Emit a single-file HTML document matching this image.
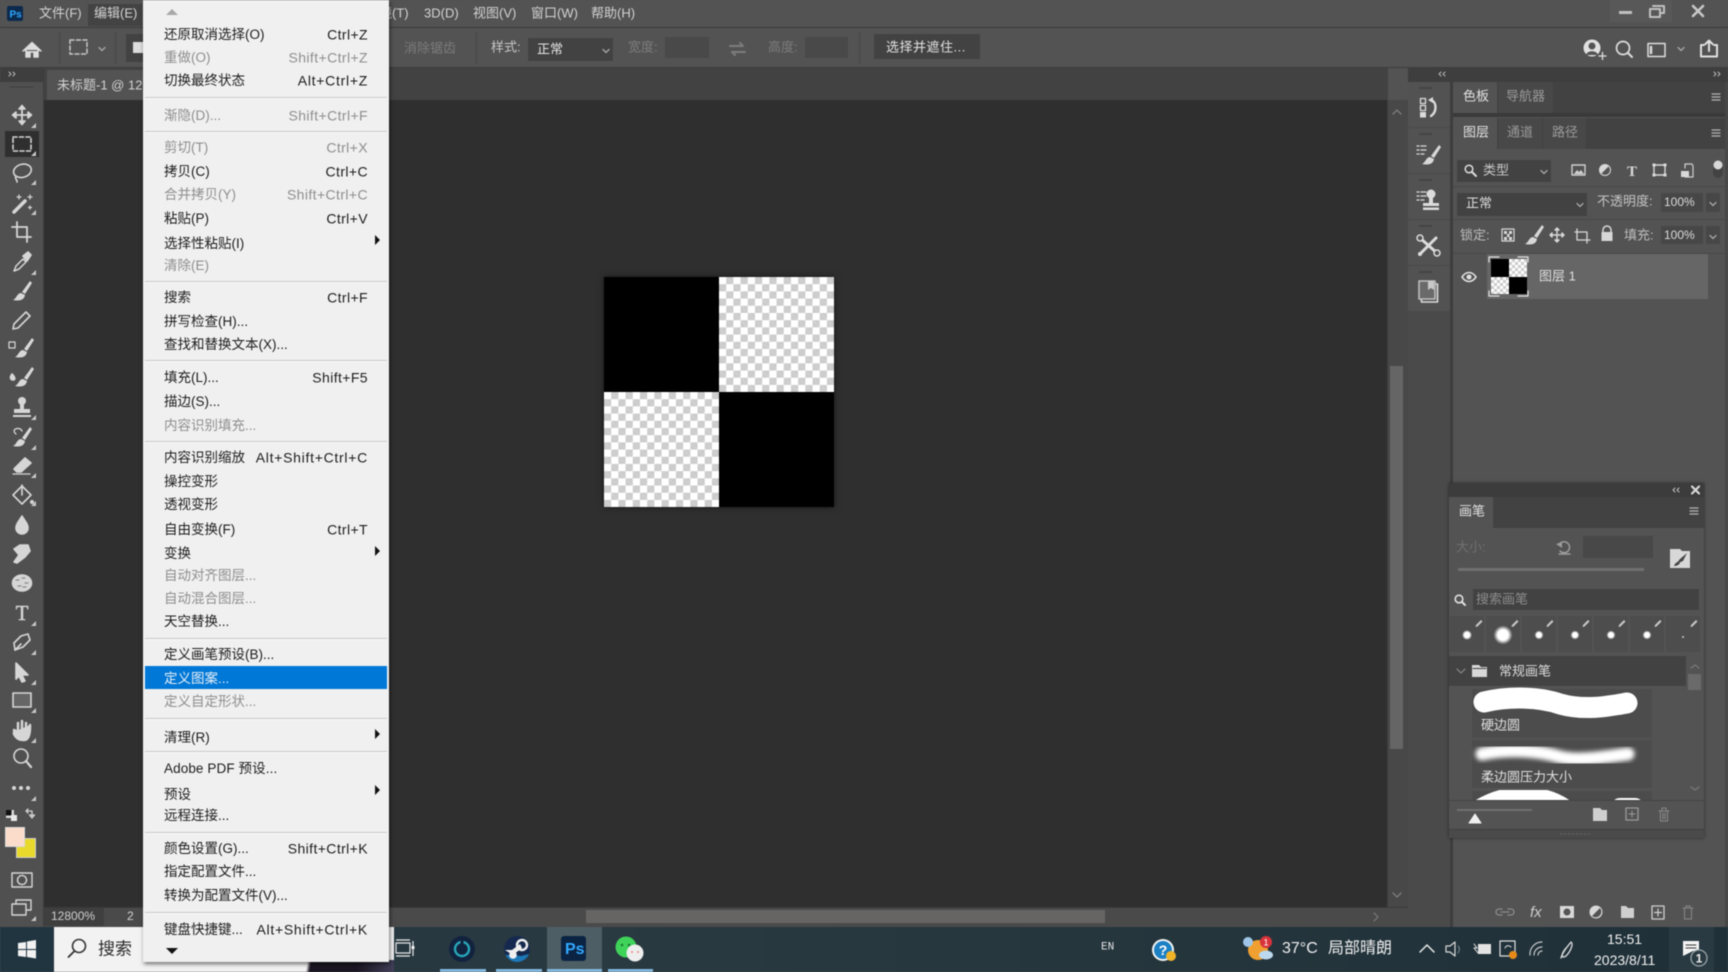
<!DOCTYPE html>
<html lang="zh"><head><meta charset="utf-8"><title>Photoshop</title>
<style>
html,body{margin:0;padding:0;background:#535353}
#p{position:relative;width:1728px;height:972px;overflow:hidden;background:#535353;font-family:"Liberation Sans","Noto Sans CJK SC",sans-serif;filter:blur(.45px)}
.b{position:absolute}
.t{position:absolute;white-space:nowrap;line-height:1;transform:translateY(-50%);font-size:13px;color:#d2d2d2}
.d{color:#7c7c7c}
.m{position:absolute;left:21px;white-space:nowrap;line-height:1;transform:translateY(calc(-50% + .7px));font-size:13.5px;color:#1c1c1c}
.s{position:absolute;right:21px;white-space:nowrap;line-height:1;transform:translateY(calc(-50% + .3px));font-size:14px;letter-spacing:.4px;color:#1c1c1c}
.w{letter-spacing:.72px}
.g{color:#8e8e8e}
.h{position:absolute;left:2px;right:2px;height:1px;background:#c6c6c6;box-shadow:0 1px 0 #fafafa}
svg{position:absolute;left:0;top:0}
</style></head><body><div id="p">

<!-- top bars -->
<div class="b" style="left:0;top:27px;width:1728px;height:1px;background:#3a3a3a"></div>
<div class="b" style="left:88px;top:4px;width:54px;height:22px;background:#434343"></div>
<div class="b" style="left:1610px;top:0;width:62px;height:22px;background:#585858"></div>
<div class="b" style="left:0;top:67px;width:1728px;height:1px;background:#3d3d3d"></div>

<span class="t" style="left:39px;top:13px">文件(F)</span>
<span class="t" style="left:94px;top:13px">编辑(E)</span>
<span class="t" style="left:366px;top:13px">滤镜(T)</span>
<span class="t" style="left:424px;top:13px">3D(D)</span>
<span class="t" style="left:473px;top:13px">视图(V)</span>
<span class="t" style="left:531px;top:13px">窗口(W)</span>
<span class="t" style="left:591px;top:13px">帮助(H)</span>

<!-- options bar -->
<div class="b" style="left:59px;top:32px;width:1px;height:32px;background:#474747"></div>
<div class="b" style="left:115px;top:32px;width:1px;height:32px;background:#474747"></div>
<div class="b" style="left:126px;top:34px;width:30px;height:28px;background:#424242"></div>
<div class="b" style="left:133px;top:42px;width:11px;height:11px;background:#dcdcdc"></div>
<span class="t d" style="left:404px;top:48px">消除锯齿</span>
<div class="b" style="left:476px;top:32px;width:1px;height:32px;background:#474747"></div>
<span class="t" style="left:491px;top:47px;color:#c8c8c8">样式:</span>
<div class="b" style="left:528px;top:38px;width:85px;height:23px;background:#424242"></div>
<span class="t" style="left:537px;top:49px;color:#e4e4e4">正常</span>
<span class="t d" style="left:628px;top:47px">宽度:</span>
<div class="b" style="left:665px;top:37px;width:44px;height:21px;background:#494949"></div>
<span class="t d" style="left:768px;top:47px">高度:</span>
<div class="b" style="left:805px;top:37px;width:43px;height:21px;background:#494949"></div>
<div class="b" style="left:859px;top:32px;width:1px;height:32px;background:#474747"></div>
<div class="b" style="left:874px;top:34px;width:106px;height:25px;background:#424242"></div>
<span class="t" style="left:886px;top:47px;color:#e2e2e2;letter-spacing:.5px">选择并遮住...</span>

<!-- tab + canvas -->
<div class="b" style="left:44px;top:68px;width:1344px;height:32px;background:#424242"></div>
<div class="b" style="left:47px;top:70px;width:100px;height:30px;background:#535353"></div>
<span class="t" style="left:57px;top:85px">未标题-1 @ 12</span>
<div class="b" style="left:44px;top:100px;width:1343px;height:807px;background:#2f2f2f"></div>

<!-- artboard -->
<div class="b" style="left:604px;top:277px;width:230px;height:230px;box-shadow:0 0 6px rgba(0,0,0,.55);background:#fff"></div>
<div class="b" style="left:719px;top:277px;width:115px;height:115px;background-color:#fff;background-image:linear-gradient(45deg,#ccc 25%,transparent 25%,transparent 75%,#ccc 75%),linear-gradient(45deg,#ccc 25%,transparent 25%,transparent 75%,#ccc 75%);background-size:14.4px 14.4px;background-position:0 0,7.2px 7.2px"></div>
<div class="b" style="left:604px;top:392px;width:115px;height:115px;background-color:#fff;background-image:linear-gradient(45deg,#ccc 25%,transparent 25%,transparent 75%,#ccc 75%),linear-gradient(45deg,#ccc 25%,transparent 25%,transparent 75%,#ccc 75%);background-size:14.4px 14.4px;background-position:0 0,7.2px 7.2px"></div>
<div class="b" style="left:604px;top:277px;width:115px;height:115px;background:#000"></div>
<div class="b" style="left:719px;top:392px;width:115px;height:115px;background:#000"></div>

<!-- vertical scrollbar -->
<div class="b" style="left:1387px;top:100px;width:21px;height:807px;background:#484848;border-left:1px solid #3c3c3c;box-sizing:border-box"></div>
<div class="b" style="left:1390px;top:366px;width:13px;height:383px;background:#656565"></div>
<!-- bottom status & h scrollbar -->
<div class="b" style="left:44px;top:907px;width:1364px;height:20px;background:#4a4a4a;border-top:1px solid #3a3a3a;box-sizing:border-box"></div>
<div class="b" style="left:44px;top:908px;width:60px;height:18px;background:#3f3f3f"></div>
<span class="t" style="left:51px;top:916px;font-size:12px;color:#d0d0d0">12800%</span>
<span class="t" style="left:127px;top:916px;font-size:12px;color:#d0d0d0">2</span>
<div class="b" style="left:586px;top:910px;width:519px;height:13px;background:#676564"></div>

<!-- left tools -->
<div class="b" style="left:0;top:68px;width:44px;height:859px;background:#505050;border-right:1px solid #3f3f3f;box-sizing:border-box"></div>
<div class="b" style="left:0;top:68px;width:44px;height:14px;background:#3e3e3e"></div>
<div class="b" style="left:5px;top:131px;width:34px;height:26px;background:#2f2f2f"></div>
<div class="b" style="left:16px;top:838px;width:20px;height:20px;background:#e8d92c;border:1px solid #cfcfcf;box-sizing:border-box"></div>
<div class="b" style="left:5px;top:827px;width:20px;height:20px;background:#fbdccb;border:1px solid #d9d9d9;box-sizing:border-box"></div>

<!-- right dock -->
<div class="b" style="left:1408px;top:68px;width:320px;height:14px;background:#3e3e3e"></div>
<div class="b" style="left:1408px;top:82px;width:42px;height:845px;background:#4a4a4a"></div>
<div class="b" style="left:1408px;top:82px;width:42px;height:45px;background:#525252"></div>
<div class="b" style="left:1408px;top:128px;width:42px;height:45px;background:#525252"></div>
<div class="b" style="left:1408px;top:174px;width:42px;height:45px;background:#525252"></div>
<div class="b" style="left:1408px;top:220px;width:42px;height:45px;background:#525252"></div>
<div class="b" style="left:1408px;top:266px;width:42px;height:45px;background:#525252"></div>
<div class="b" style="left:1450px;top:82px;width:3px;height:845px;background:#3d3d3d"></div>
<div class="b" style="left:1453px;top:82px;width:275px;height:845px;background:#535353"></div>
<div class="b" style="left:1725px;top:82px;width:3px;height:845px;background:#474747"></div>

<!-- panel tabs -->
<div class="b" style="left:1453px;top:82px;width:272px;height:31px;background:#424242"></div>
<div class="b" style="left:1453px;top:82px;width:44px;height:31px;background:#535353"></div>
<div class="b" style="left:1498px;top:82px;width:55px;height:31px;background:#484848"></div>
<div class="b" style="left:1453px;top:113px;width:272px;height:4px;background:#3a3a3a"></div>
<div class="b" style="left:1453px;top:118px;width:272px;height:31px;background:#424242"></div>
<div class="b" style="left:1453px;top:118px;width:44px;height:31px;background:#535353"></div>
<div class="b" style="left:1498px;top:118px;width:44px;height:31px;background:#484848"></div>
<div class="b" style="left:1543px;top:118px;width:43px;height:31px;background:#484848"></div>
<span class="t" style="left:1463px;top:96px;color:#e2e2e2">色板</span>
<span class="t" style="left:1506px;top:96px;color:#9a9a9a">导航器</span>
<span class="t" style="left:1463px;top:132px;color:#e2e2e2">图层</span>
<span class="t" style="left:1507px;top:132px;color:#9a9a9a">通道</span>
<span class="t" style="left:1552px;top:132px;color:#9a9a9a">路径</span>

<!-- layer controls -->
<div class="b" style="left:1457px;top:160px;width:94px;height:22px;background:#424242"></div>
<span class="t" style="left:1483px;top:170px;color:#c9c9c9">类型</span>
<div class="b" style="left:1453px;top:186px;width:272px;height:1px;background:#484848"></div>
<div class="b" style="left:1457px;top:193px;width:130px;height:23px;background:#424242"></div>
<span class="t" style="left:1466px;top:203px;color:#dcdcdc">正常</span>
<span class="t" style="left:1597px;top:201px;color:#c4c4c4">不透明度:</span>
<div class="b" style="left:1661px;top:193px;width:42px;height:19px;background:#474747"></div>
<div class="b" style="left:1706px;top:193px;width:14px;height:19px;background:#474747"></div>
<span class="t" style="left:1664px;top:202px;font-size:12px;color:#dcdcdc">100%</span>
<div class="b" style="left:1453px;top:219px;width:272px;height:1px;background:#484848"></div>
<span class="t" style="left:1460px;top:235px;color:#bdbdbd">锁定:</span>
<span class="t" style="left:1624px;top:235px;color:#bdbdbd">填充:</span>
<div class="b" style="left:1661px;top:226px;width:42px;height:18px;background:#474747"></div>
<div class="b" style="left:1706px;top:226px;width:14px;height:18px;background:#474747"></div>
<span class="t" style="left:1664px;top:235px;font-size:12px;color:#dcdcdc">100%</span>
<div class="b" style="left:1453px;top:253px;width:272px;height:1px;background:#484848"></div>
<div class="b" style="left:1487px;top:254px;width:221px;height:45px;background:#666666"></div>
<div class="b" style="left:1491px;top:259px;width:36px;height:35px;background-color:#fff;background-image:linear-gradient(45deg,#ccc 25%,transparent 25%,transparent 75%,#ccc 75%),linear-gradient(45deg,#ccc 25%,transparent 25%,transparent 75%,#ccc 75%);background-size:6px 6px;background-position:0 0,3px 3px"></div>
<div class="b" style="left:1491px;top:259px;width:18px;height:18px;background:#000"></div>
<div class="b" style="left:1509px;top:277px;width:18px;height:17px;background:#000"></div>
<span class="t" style="left:1539px;top:276px;color:#dfdfdf">图层 1</span>

<!-- brush panel -->
<div class="b" style="left:1449px;top:483px;width:255px;height:355px;background:#535353;box-shadow:0 0 3px rgba(0,0,0,.5)"></div>
<div class="b" style="left:1449px;top:483px;width:255px;height:14px;background:#3c3c3c"></div>
<div class="b" style="left:1449px;top:497px;width:255px;height:31px;background:#424242"></div>
<div class="b" style="left:1449px;top:497px;width:44px;height:31px;background:#535353"></div>
<span class="t" style="left:1459px;top:511px;color:#e2e2e2">画笔</span>
<span class="t" style="left:1456px;top:547px;color:#707070">大小:</span>
<div class="b" style="left:1583px;top:536px;width:70px;height:22px;background:#484848"></div>
<div class="b" style="left:1458px;top:568px;width:186px;height:3px;background:#707070"></div>
<div class="b" style="left:1473px;top:589px;width:226px;height:21px;background:#424242"></div>
<span class="t" style="left:1476px;top:599px;color:#8c8c8c">搜索画笔</span>
<div class="b" style="left:1450px;top:616px;width:34px;height:36px;background:#4d4d4d"></div>
<div class="b" style="left:1486px;top:616px;width:34px;height:36px;background:#4d4d4d"></div>
<div class="b" style="left:1522px;top:616px;width:34px;height:36px;background:#4d4d4d"></div>
<div class="b" style="left:1558px;top:616px;width:34px;height:36px;background:#4d4d4d"></div>
<div class="b" style="left:1594px;top:616px;width:34px;height:36px;background:#4d4d4d"></div>
<div class="b" style="left:1630px;top:616px;width:34px;height:36px;background:#4d4d4d"></div>
<div class="b" style="left:1666px;top:616px;width:34px;height:36px;background:#4d4d4d"></div>
<div class="b" style="left:1449px;top:656px;width:237px;height:30px;background:#424242"></div>
<span class="t" style="left:1499px;top:671px;color:#dcdcdc">常规画笔</span>
<div class="b" style="left:1688px;top:674px;width:13px;height:16px;background:#6a6a6a"></div>
<div class="b" style="left:1472px;top:689px;width:180px;height:49px;background:#4c4c4c"></div>
<div class="b" style="left:1472px;top:740px;width:180px;height:48px;background:#4c4c4c"></div>
<div class="b" style="left:1472px;top:791px;width:180px;height:9px;background:#4c4c4c"></div>
<span class="t" style="left:1481px;top:725px;color:#e0e0e0">硬边圆</span>
<span class="t" style="left:1481px;top:777px;color:#e0e0e0">柔边圆压力大小</span>
<div class="b" style="left:1449px;top:800px;width:255px;height:1px;background:#444"></div>
<div class="b" style="left:1457px;top:809px;width:75px;height:2px;background:#707070"></div>
<div class="b" style="left:1449px;top:829px;width:255px;height:9px;background:#4a4a4a;border-top:1px solid #3f3f3f;box-sizing:border-box"></div>

<!-- taskbar -->
<div class="b" style="left:0;top:927px;width:1728px;height:45px;background:linear-gradient(90deg,#213541 0,#2a3a41 35%,#25363d 65%,#1f3039 100%)"></div>
<div class="b" style="left:1669px;top:927px;width:45px;height:45px;background:#2a3a42"></div>
<div class="b" style="left:54px;top:927px;width:340px;height:45px;background:#f2f2f2"></div>
<div class="b" style="left:300px;top:960px;width:94px;height:12px;background:linear-gradient(100deg,#f2f2f2 0 8%,#1a1522 12% 60%,#42405a 100%)"></div>
<span class="t" style="left:98px;top:949px;font-size:17px;color:#2b2b2b">搜索</span>
<div class="b" style="left:547px;top:927px;width:55px;height:45px;background:#4e5e65"></div>
<div class="b" style="left:440px;top:969px;width:46px;height:3px;background:#84b9de"></div>
<div class="b" style="left:496px;top:969px;width:46px;height:3px;background:#84b9de"></div>
<div class="b" style="left:547px;top:969px;width:55px;height:3px;background:#84b9de"></div>
<div class="b" style="left:608px;top:969px;width:45px;height:3px;background:#84b9de"></div>
<span class="t" style="left:1101px;top:948px;font-size:11px;font-family:'Liberation Mono',monospace;color:#e6e6e6">EN</span>
<span class="t" style="left:1282px;top:949px;font-size:16px;color:#f0f0f0">37°C</span>
<span class="t" style="left:1328px;top:949px;font-size:16px;color:#f0f0f0">局部晴朗</span>
<span class="t" style="left:1607px;top:939px;font-size:14px;color:#f0f0f0">15:51</span>
<span class="t" style="left:1594px;top:960px;font-size:14px;color:#f0f0f0">2023/8/11</span>

<!-- icons -->
<svg width="1728" height="972" viewBox="0 0 1728 972" fill="none" stroke-linecap="round" stroke-linejoin="round">
<defs>
<radialGradient id="dot"><stop offset="0" stop-color="#fff"/><stop offset=".55" stop-color="#fff"/><stop offset="1" stop-color="#fff" stop-opacity="0"/></radialGradient>
<filter id="soft" x="-10%" y="-50%" width="120%" height="200%"><feGaussianBlur stdDeviation="2.300"/></filter>
<g id="br"><path d="M8-10 0 1 3 3 10-8Z" fill="#d8d8d8"/><path d="M-1 2C-5 2-5 7-9 9-4 10 2 10 3 4Z" fill="#d8d8d8"/></g>
<path id="ct" d="M14 8V13H9Z" fill="#c8c8c8"/>
<g id="pn"><path d="M-3 3 2-2 3.500-.5-1.500 4.500-3.500 5Z" fill="#c8c8c8"/></g>
<g id="chev"><path d="M-3-1.500 0 1.500 3-1.500" stroke="#a8a8a8" stroke-width="1.300"/></g>
<g id="ham"><path d="M-4-3H4M-4 0H4M-4 3H4" stroke="#b4b4b4" stroke-width="1.200"/></g>
</defs>

<!-- ps logo -->
<rect x="7" y="6" width="16" height="15" rx="2" fill="#0c2a4d"/>
<text x="9.500" y="17.500" font-family="Liberation Sans" font-size="10" font-weight="bold" fill="#31a8ff">Ps</text>

<!-- top left options -->
<path d="M23 51 32 42.500 41 51M26 50V57H30V52H34V57H38V50" fill="#dcdcdc" stroke="#dcdcdc" stroke-width="1.500"/>
<rect x="70" y="40" width="17" height="14" stroke="#c8c8c8" stroke-width="1.500" stroke-dasharray="4 2.500"/>
<use href="#chev" x="102" y="49"/>
<use href="#chev" x="606" y="51"/>
<path d="M730 46H743L740 43M745 52H732L735 55" stroke="#7c7c7c" stroke-width="2"/>

<!-- window controls -->
<path d="M1619 12.500H1632" stroke="#c0c0c0" stroke-width="3" stroke-linecap="butt"/>
<path d="M1653 6H1664V13H1660M1650 9H1660V17H1650Z" stroke="#c0c0c0" stroke-width="2"/>
<path d="M1693 6 1703 16M1703 6 1693 16" stroke="#c8c8c8" stroke-width="2.600"/>

<!-- top right -->
<circle cx="1592" cy="48" r="8.500" fill="#e0e0e0"/><circle cx="1592" cy="46" r="3.500" fill="#535353"/><path d="M1586 55C1587 50 1597 50 1598 55" fill="#535353"/><path d="M1599 56H1606M1602.500 52.500V59.500" stroke="#e0e0e0" stroke-width="1.300"/>
<circle cx="1623" cy="48" r="6.500" stroke="#dcdcdc" stroke-width="1.700"/><path d="M1628 53 1632 57" stroke="#dcdcdc" stroke-width="2"/>
<rect x="1648" y="43.500" width="17" height="13" stroke="#dcdcdc" stroke-width="1.500"/><path d="M1651 47V53" stroke="#dcdcdc" stroke-width="2.500"/>
<use href="#chev" x="1681" y="49"/>
<path d="M1704 45H1701V56.500H1717V45H1714M1709 51V41M1705.500 44 1709 40.500 1712.500 44" stroke="#e0e0e0" stroke-width="2"/>

<!-- double chevrons -->
<path d="M9 72 11 74 9 76M13 72 15 74 13 76" stroke="#b8b8b8"/>
<path d="M1441 72 1439 74 1441 76M1445 72 1443 74 1445 76" stroke="#b8b8b8"/>
<path d="M1714 72 1716 74 1714 76M1718 72 1720 74 1718 76" stroke="#b8b8b8"/>
<path d="M10 87H34" stroke="#3f3f3f" stroke-dasharray="2 1"/>

<!-- tools -->
<g stroke="#d6d6d6" stroke-width="1.600">
<g transform="translate(22,115)"><path d="M0-9V9M-9 0H9" stroke-width="1.800"/><path d="M-3-6 0-9.500 3-6ZM-3 6 0 9.500 3 6ZM-6-3-9.500 0-6 3ZM6-3 9.500 0 6 3Z" fill="#d6d6d6"/></g>
<g transform="translate(22,144)"><rect x="-9" y="-7" width="18" height="14" stroke-dasharray="4 2.500"/></g>
<g transform="translate(22,173)"><ellipse cx="1" cy="-2" rx="9" ry="6.500" transform="rotate(-15)"/><path d="M-6 3C-8 6-4 7-5 9"/></g>
<g transform="translate(22,203)"><path d="M-8 9 3-2" stroke-width="3.500"/><path d="M-3-8V-4M-5-6H-1M8-8V-4M6-6H10M8 3V6M6.500 4.500H9.500" stroke-width="1.200"/></g>
<g transform="translate(22,232)"><path d="M-5-10V5H9M-10-5H5V10" stroke-width="1.800"/></g>
<g transform="translate(22,262)"><path d="M-8 9-6 4 1-3 4 0-3 7Z" stroke-width="1.500"/><path d="M1-6 6-10 9-7 5-1Z" fill="#d6d6d6"/></g>
<use href="#br" x="22" y="291" stroke="none"/>
<g transform="translate(22,320)"><path d="M-9 9-8 4 4-8 8-4-4 8Z"/></g>
<g transform="translate(24,348)"><use href="#br" stroke="none"/><rect x="-15" y="-6" width="6" height="6" stroke-width="1.200"/></g>
<g transform="translate(24,377)"><use href="#br" stroke="none"/><path d="M-12-3C-15 1-13 3-11 3-9 3-8 1-12-3Z" fill="#d6d6d6"/></g>
<g transform="translate(22,407)" fill="#d6d6d6" stroke="none"><circle cx="0" cy="-6" r="4"/><path d="M-2-3H2V2H8V6H-8V2H-2ZM-9 8H9V10H-9Z"/></g>
<g transform="translate(22,437)"><use href="#br" stroke="none"/><path d="M-6-3C-12-8-2-11 0-6" stroke-width="1.300"/></g>
<g transform="translate(22,465)"><path d="M-8 4 3-7 9-2-1 7H-5Z" fill="#d6d6d6"/><path d="M-9 9H8" stroke-width="1.300"/></g>
<g transform="translate(22,495)"><path d="M-9 0 0-9 9 0 0 9Z"/><path d="M0-10V0" /><circle cx="10" cy="7" r="2" fill="#d6d6d6" stroke="none"/></g>
<g transform="translate(22,525)"><path d="M0-9C3-4 6-1 6 3A6 6 0 0 1-6 3C-6-1-3-4 0-9Z" fill="#d6d6d6"/></g>
<g transform="translate(22,553)"><path d="M-8 9-3 2-8-4-2-8H6L8-2 3 4-5 10Z" fill="#d6d6d6"/></g>
<g transform="translate(22,583)"><ellipse cx="0" cy="0" rx="9.500" ry="8" fill="#d6d6d6"/><path d="M-6-3H-3M0-5H3M3 0H6M-4 3H-1M1 4H4" stroke="#8a8a8a" stroke-width="1.200"/></g>
<text x="22" y="620" text-anchor="middle" font-family="Liberation Serif" font-size="21" font-weight="normal" fill="#d6d6d6" stroke="#d6d6d6" stroke-width=".4">T</text>
<g transform="translate(22,642)"><path d="M-7 8-8 1-1-6 6-8 8-2 1 5Z"/><path d="M-7 8-1 2"/></g>
<g transform="translate(21,672)"><path d="M-5-9 7 3H1L4 9 1 10-2 4-5 7Z" fill="#d6d6d6"/></g>
<g transform="translate(22,700)"><rect x="-9" y="-7" width="18" height="14" fill="#666" stroke-width="1.600"/></g>
<g transform="translate(22,730)"><path d="M-8 2V4C-5 10-1 10 2 10 6 10 8 6 8-3V-5M4-7V1M0-9V1M-4-7V2M-8 0-4 2" fill="#d6d6d6" stroke-width="2.500"/></g>
<g transform="translate(21,758)"><circle cx="0" cy="-2" r="7"/><path d="M5 3 10 9" stroke-width="2.200"/></g>
<g transform="translate(21,788)" fill="#d6d6d6" stroke="none"><circle cx="-7" cy="0" r="2"/><circle cx="0" cy="0" r="2"/><circle cx="7" cy="0" r="2"/></g>
<g transform="translate(22,880)"><rect x="-10" y="-7" width="20" height="14" stroke-width="1.400"/><circle r="4.500" stroke-dasharray="1.500 1.500"/></g>
<g transform="translate(22,908)"><rect x="-6" y="-8" width="15" height="10" stroke-width="1.400"/><rect x="-10" y="-4" width="14" height="11" fill="#505050" stroke-width="1.400"/></g>
</g>
<use href="#ct" x="22" y="115"/><use href="#ct" x="22" y="143"/><use href="#ct" x="22" y="172"/><use href="#ct" x="22" y="202"/><use href="#ct" x="22" y="262"/><use href="#ct" x="22" y="407"/><use href="#ct" x="22" y="437"/><use href="#ct" x="22" y="465"/><use href="#ct" x="22" y="493"/><use href="#ct" x="22" y="613"/><use href="#ct" x="22" y="642"/><use href="#ct" x="22" y="672"/><use href="#ct" x="22" y="700"/><use href="#ct" x="22" y="730"/><use href="#ct" x="22" y="788"/><use href="#ct" x="22" y="908"/>
<rect x="6" y="810" width="8" height="8" fill="#d8d8d8"/><rect x="6" y="810" width="5.500" height="5.500" fill="#111"/><rect x="11" y="815" width="6" height="6" fill="#e8e8e8"/>
<path d="M26 811H32V816M32 818 29.500 815H34.500ZM26 811 28 809M26 811 28 813" stroke="#d0d0d0" stroke-width="1.300"/>

<!-- v scroll arrows -->
<path d="M1393 114 1397 110 1401 114" stroke="#7b7b7b" stroke-width="1.400"/>
<path d="M1393 893 1397 897 1401 893" stroke="#7b7b7b" stroke-width="1.400"/>
<path d="M1374 913 1378 917 1374 921" stroke="#7b7b7b" stroke-width="1.200"/>

<!-- dock icons -->
<g stroke="#dcdcdc" fill="#dcdcdc">
<path d="M1420 88H1432" stroke="#444" stroke-dasharray="2 1" stroke-width="2"/><path d="M1420 134H1432" stroke="#444" stroke-dasharray="2 1" stroke-width="2"/><path d="M1420 180H1432" stroke="#444" stroke-dasharray="2 1" stroke-width="2"/><path d="M1420 226H1432" stroke="#444" stroke-dasharray="2 1" stroke-width="2"/><path d="M1420 272H1432" stroke="#444" stroke-dasharray="2 1" stroke-width="2"/>
<g fill="none" stroke-width="1.300"><rect x="1420.500" y="98.500" width="5" height="5"/><rect x="1420.500" y="105.500" width="5" height="5"/></g><rect x="1420" y="112" width="6" height="5.500" stroke="none"/>
<path d="M1431 100C1437 102 1437 112 1431 116" fill="none" stroke-width="2.400"/><path d="M1428 100 1433 97V103Z" stroke="none"/>
<use href="#br" x="1431" y="155" stroke="none"/><path d="M1417 146H1419M1417 150H1419M1417 154H1419M1421 146H1426M1421 150H1426M1421 154H1424" stroke-width="1.300" fill="none"/>
<path d="M1417 192H1419M1417 196H1419M1417 200H1419M1421 192H1426M1421 196H1426M1421 200H1424" stroke-width="1.300" fill="none"/>
<g stroke="none"><circle cx="1431" cy="194" r="4.500"/><path d="M1429 197H1433V203H1439V206H1423V203H1429ZM1423 207.500H1439V210H1423Z"/></g>
<path d="M1421 253 1436 238M1420 238 1437 253" stroke-width="3" fill="none"/><circle cx="1420" cy="238" r="3" fill="#525252" stroke-width="1.500"/><circle cx="1437" cy="253" r="3" fill="#525252" stroke-width="1.500"/><circle cx="1420" cy="254" r="2" stroke="none"/>
<rect x="1421.500" y="284" width="16" height="18" fill="none" stroke-width="1.600"/><rect x="1419" y="281" width="16" height="18" fill="#6a6a6a" stroke="#bdbdbd" stroke-width="1.600"/><path d="M1428 281V290L1431 288 1434 290V281Z" fill="#c8c8c8" stroke="none"/>
</g>

<!-- panel hamburgers -->
<use href="#ham" x="1716" y="97"/><use href="#ham" x="1716" y="133"/><use href="#ham" x="1694" y="511"/>

<!-- filter row -->
<circle cx="1469" cy="169" r="3.800" stroke="#dcdcdc" stroke-width="1.500"/><path d="M1472 172 1476 176" stroke="#dcdcdc" stroke-width="2"/>
<use href="#chev" x="1544" y="172"/><use href="#chev" x="1580" y="205"/><use href="#chev" x="1713" y="204"/><use href="#chev" x="1713" y="237"/>
<rect x="1572" y="165" width="13" height="10" stroke="#d0d0d0" stroke-width="1.400"/><path d="M1574 174 1577 170 1579 172 1581 170 1584 174Z" fill="#d0d0d0"/>
<circle cx="1605" cy="170" r="5.500" fill="#d8d8d8"/><path d="M1608.900 166.100A5.500 5.500 0 0 1 1601.100 173.900Z" fill="#535353"/><circle cx="1605" cy="170" r="5.500" stroke="#d8d8d8"/>
<text x="1632" y="176" text-anchor="middle" font-family="Liberation Serif" font-size="15" font-weight="bold" fill="#d8d8d8">T</text>
<rect x="1654" y="165" width="11" height="10" stroke="#d8d8d8" stroke-width="1.400"/><path d="M1652.500 163.500h3v3h-3zM1663.500 163.500h3v3h-3zM1652.500 173.500h3v3h-3zM1663.500 173.500h3v3h-3z" fill="#d8d8d8"/>
<path d="M1685 168V164H1692L1693 166V177H1685" stroke="#d0d0d0" stroke-width="1.200"/><rect x="1681" y="171" width="8" height="6" fill="#d8d8d8"/>
<rect x="1713" y="165" width="10" height="13" rx="5" fill="#424242"/><circle cx="1718" cy="165" r="4.500" fill="#d8d8d8"/>

<!-- lock row -->
<g fill="#d8d8d8"><rect x="1502" y="229" width="12" height="12" fill="none" stroke="#d8d8d8" stroke-width="1.200"/><rect x="1504" y="231" width="3" height="3"/><rect x="1509" y="231" width="3" height="3"/><rect x="1507" y="234" width="2.500" height="3"/><rect x="1504" y="237" width="3" height="3"/><rect x="1509" y="237" width="3" height="3"/></g>
<use href="#br" x="1534" y="235" stroke="none"/>
<g transform="translate(1557,235)" stroke="#d8d8d8" stroke-width="1.400"><path d="M0-6V6M-6 0H6"/><path d="M-2-5 0-7 2-5ZM-2 5 0 7 2 5ZM-5-2-7 0-5 2ZM5-2 7 0 5 2Z" fill="#d8d8d8"/></g>
<path d="M1577 229V240H1590M1575 232H1587V243" stroke="#d8d8d8" stroke-width="1.300"/>
<path d="M1603 232V230A4 4 0 0 1 1611 230V232" stroke="#d8d8d8" stroke-width="1.500"/><rect x="1601.500" y="232" width="11" height="9" fill="#d8d8d8"/>

<!-- layer row -->
<path d="M1462 277C1466 271 1472 271 1476 277 1472 283 1466 283 1462 277Z" stroke="#e0e0e0" stroke-width="1.600"/><circle cx="1469" cy="277" r="2.500" fill="#e0e0e0"/>
<path d="M1489 262V257H1499M1518 257H1528V262M1489 291V296H1499M1518 296H1528V291" stroke="#e4e4e4" stroke-width="1.200"/>

<!-- brush panel icons -->
<path d="M1675 488 1673 490 1675 492M1679 488 1677 490 1679 492" stroke="#c4c4c4"/>
<path d="M1692 486.500 1699 493.500M1699 486.500 1692 493.500" stroke="#d8d8d8" stroke-width="2.200"/>
<path d="M1559 554H1570M1559 545A5.500 5.500 0 1 1 1560 551" stroke="#9c9c9c" stroke-width="1.500"/><path d="M1556 544 1562 542V548Z" fill="#9c9c9c"/>
<path d="M1670 549H1680L1682 551H1690V568H1670Z" fill="#d8d8d8"/><path d="M1676 564 1680 559 1687 553 1683 561Z" fill="#454545"/><path d="M1674 566C1675 563 1677 562 1678 562L1680 563C1679 565 1676 566 1674 566Z" fill="#454545"/>
<circle cx="1459" cy="599" r="3.800" stroke="#e0e0e0" stroke-width="1.600"/><path d="M1462 602 1465 605" stroke="#e0e0e0" stroke-width="2"/>
<g stroke="none">
<circle cx="1467" cy="635" r="5" fill="url(#dot)"/><circle cx="1503" cy="635" r="9.500" fill="url(#dot)"/><circle cx="1539" cy="635" r="4.500" fill="url(#dot)"/><circle cx="1575" cy="635" r="4.500" fill="url(#dot)"/><circle cx="1611" cy="635" r="4.500" fill="url(#dot)"/><circle cx="1647" cy="635" r="4.500" fill="url(#dot)"/><circle cx="1683" cy="637" r="1" fill="#ccc"/>
<use href="#pn" x="1479" y="622"/><use href="#pn" x="1515" y="622"/><use href="#pn" x="1550" y="622"/><use href="#pn" x="1586" y="622"/><use href="#pn" x="1622" y="622"/><use href="#pn" x="1658" y="622"/><use href="#pn" x="1694" y="622"/>
</g>
<path d="M1457 669 1461 673 1465 669" stroke="#8a8a8a" stroke-width="1.200"/>
<path d="M1472 665H1479L1481 667H1487V677H1472Z" fill="#d8d8d8"/><path d="M1473 668.500H1486" stroke="#424242"/>
<path d="M1691 668 1695 665 1699 668" stroke="#777" stroke-width="1.400"/><path d="M1691 787 1695 790 1699 787" stroke="#777" stroke-width="1.400"/>
<path d="M1484 702C1510 696 1540 697 1560 704 1585 711 1610 706 1627 703" stroke="#fff" stroke-width="21"/>
<path d="M1482 754C1510 748 1540 751 1560 757 1580 762 1610 756 1628 754" stroke="#fff" stroke-width="13" filter="url(#soft)"/>
<clipPath id="c3"><rect x="1472" y="790" width="180" height="10"/></clipPath>
<g clip-path="url(#c3)"><path d="M1480 808C1510 790 1545 794 1565 808" stroke="#fff" stroke-width="18"/><path d="M1620 807 1635 807" stroke="#fff" stroke-width="18"/></g>
<path d="M1469 823 1475 814 1481 823Z" fill="#f0f0f0" stroke="#f0f0f0"/>
<path d="M1593 808H1600L1602 810H1607V821H1593Z" fill="#cfcfcf"/>
<rect x="1626" y="808" width="12" height="12" stroke="#9a9a9a" stroke-width="1.300"/><path d="M1632 811V817M1629 814H1635" stroke="#9a9a9a"/>
<path d="M1659 811H1669M1662 811V808H1666V811M1660.500 811V821H1667.500V811M1663 813V819M1665 813V819" stroke="#888" stroke-width="1.100"/>
<path d="M1560 834H1590" stroke="#5f5f5f" stroke-dasharray="2 2"/>

<!-- layers footer -->
<path d="M1502 909H1499A3 3 0 0 0 1499 915H1502M1508 909H1511A3 3 0 0 1 1511 915H1508M1501 912H1509" stroke="#8a8a8a" stroke-width="1.300"/>
<text x="1530" y="917" font-family="Liberation Sans" font-style="italic" font-size="15" fill="#cfcfcf">fx</text>
<rect x="1560" y="906" width="14" height="12" fill="#d8d8d8"/><circle cx="1567" cy="912" r="3.500" fill="#535353"/>
<circle cx="1596" cy="912" r="6" fill="#d8d8d8"/><path d="M1600.200 907.800A6 6 0 0 1 1591.800 916.200Z" fill="#535353"/><circle cx="1596" cy="912" r="6" stroke="#d8d8d8"/>
<path d="M1621 906H1626L1628 908H1634V918H1621Z" fill="#cfcfcf"/>
<rect x="1652" y="906" width="12" height="13" stroke="#cfcfcf" stroke-width="1.300"/><path d="M1658 909V916M1654.500 912.500H1661.500" stroke="#cfcfcf" stroke-width="1.200"/>
<path d="M1683 908H1693M1686 908V906H1690V908M1684.500 908V919H1691.500V908" stroke="#808080" stroke-width="1.200"/>

<!-- taskbar icons -->
<path d="M18 943 26 942V949H18ZM27 941.500 36 940V949H27ZM18 950H26V957L18 956ZM27 950H36V958.500L27 957Z" fill="#f2f2f2"/>
<circle cx="79" cy="946" r="6.500" stroke="#333" stroke-width="1.600"/><path d="M74.500 951 68.500 957" stroke="#333" stroke-width="1.800"/>
<path d="M396 943H410V953H396ZM396 940H410M396 956H410M413 941V956" stroke="#e8e8e8" stroke-width="1.200" stroke-linecap="butt"/><rect x="411.500" y="946" width="3" height="3" fill="#f0f0f0"/>
<circle cx="462" cy="949" r="13" fill="#12233f"/><circle cx="462" cy="949" r="7" stroke="#27a7b8" stroke-width="2.400"/><path d="M462 941V945" stroke="#12233f" stroke-width="3"/>
<circle cx="517" cy="949" r="13" fill="#15294f"/><path d="M505.500 955A13 13 0 0 0 529 954L521 956 512 955Z" fill="#1e78b8"/>
<circle cx="522" cy="945" r="5" stroke="#f0f0f0" stroke-width="2.400"/><circle cx="513" cy="955" r="3.800" fill="#f0f0f0"/><path d="M505 950 513 955 522 948 520 944 512 950Z" fill="#f0f0f0"/>
<rect x="561" y="936" width="25" height="25" rx="3" fill="#0b2444"/>
<text x="565" y="954" font-family="Liberation Sans" font-size="16" font-weight="bold" fill="#31a8ff">Ps</text>
<circle cx="626" cy="947" r="10.500" fill="#3fd35a"/><circle cx="635" cy="953" r="8.500" fill="#eeeeee"/><circle cx="622" cy="945" r="1.300" fill="#1c7a31"/><circle cx="629" cy="945" r="1.300" fill="#1c7a31"/><circle cx="632" cy="952" r="1" fill="#e88"/><circle cx="638" cy="952" r="1" fill="#e88"/>

<!-- tray -->
<circle cx="1163" cy="950" r="11" fill="#f4f4f4"/><circle cx="1163" cy="950" r="9" fill="#1c80c4"/><text x="1163" y="955" text-anchor="middle" font-family="Liberation Sans" font-size="14" font-weight="bold" fill="#fff">?</text><circle cx="1171" cy="956" r="5" fill="#f0b429"/>
<circle cx="1258" cy="950" r="10" fill="#f0a030"/><circle cx="1248" cy="942" r="5" fill="#9fc6e6"/><circle cx="1266" cy="942" r="6" fill="#d9333a"/><text x="1266" y="945.500" text-anchor="middle" font-family="Liberation Sans" font-size="9" fill="#fff">1</text><ellipse cx="1266" cy="955" rx="7" ry="4.500" fill="#bcd8ee"/>
<path d="M1420 952 1427 945 1434 952" stroke="#e8e8e8" stroke-width="1.500"/>
<path d="M1446 946H1450L1455 942V956L1450 952H1446Z" stroke="#d8d8d8" stroke-width="1.200"/><path d="M1458 946C1460 948 1460 950 1458 953" stroke="#7f8a8f"/>
<rect x="1478" y="944" width="13" height="10" fill="#e4e4e4"/><path d="M1474 944 1477 948H1474L1478 953" stroke="#e4e4e4"/>
<rect x="1500" y="941" width="15" height="15" stroke="#e0e0e0" stroke-width="1.200"/><circle cx="1513" cy="955" r="4" fill="#e88a1a"/><path d="M1505 948A3.500 3.500 0 0 1 1511 947" stroke="#e0e0e0"/>
<path d="M1530 955A12 12 0 0 1 1542 942M1534 955A8 8 0 0 1 1542 947M1538 955A4 4 0 0 1 1542 951" stroke="#c8c8c8" stroke-width="1.200"/>
<path d="M1561 958C1563 950 1570 944 1571 942 1574 944 1570 952 1566 956 1562 959 1560 955 1566 948" stroke="#e0e0e0" stroke-width="1.300"/>
<path d="M1683 941H1699V951H1693L1683 956Z" fill="#f4f4f4"/><path d="M1686 945H1696M1686 948H1696" stroke="#333"/><circle cx="1699" cy="958" r="8" stroke="#9aa5aa" stroke-width="1.300" fill="#2a3a42"/><text x="1699" y="962.500" text-anchor="middle" font-family="Liberation Sans" font-size="12" font-weight="bold" fill="#f0f0f0">1</text>
</svg>

<!-- edit menu -->
<div class="b" style="left:143px;top:0;width:246px;height:962px;background:#f0f0f0;box-shadow:1px 2px 4px rgba(0,0,0,.55)">
<svg width="246" height="962" viewBox="0 0 246 962"><path d="M23 15 29 9 35 15Z" fill="#a8a8a8"/><path d="M232 235 237 240 232 245ZM232 546 237 551 232 556ZM232 729 237 734 232 739ZM232 785 237 790 232 795Z" fill="#111"/><path d="M23 948H35L29 954Z" fill="#111"/></svg>
<span class="m" style="top:34px">还原取消选择(O)</span><span class="s" style="top:34px">Ctrl+Z</span>
<span class="m g" style="top:57px">重做(O)</span><span class="s g" style="top:57px">Shift+Ctrl+Z</span>
<span class="m" style="top:80px">切换最终状态</span><span class="s w" style="top:80px">Alt+Ctrl+Z</span>
<div class="h" style="top:97px"></div>
<span class="m g" style="top:115px">渐隐(D)...</span><span class="s g" style="top:115px">Shift+Ctrl+F</span>
<div class="h" style="top:131px"></div>
<span class="m g" style="top:147px">剪切(T)</span><span class="s g" style="top:147px">Ctrl+X</span>
<span class="m" style="top:171px">拷贝(C)</span><span class="s" style="top:171px">Ctrl+C</span>
<span class="m g" style="top:194px">合并拷贝(Y)</span><span class="s g" style="top:194px">Shift+Ctrl+C</span>
<span class="m" style="top:218px">粘贴(P)</span><span class="s" style="top:218px">Ctrl+V</span>
<span class="m" style="top:243px">选择性粘贴(I)</span>
<span class="m g" style="top:265px">清除(E)</span>
<div class="h" style="top:281px"></div>
<span class="m" style="top:297px">搜索</span><span class="s" style="top:297px">Ctrl+F</span>
<span class="m" style="top:321px">拼写检查(H)...</span>
<span class="m" style="top:344px">查找和替换文本(X)...</span>
<div class="h" style="top:360px"></div>
<span class="m" style="top:377px">填充(L)...</span><span class="s" style="top:377px">Shift+F5</span>
<span class="m" style="top:401px">描边(S)...</span>
<span class="m g" style="top:425px">内容识别填充...</span>
<div class="h" style="top:441px"></div>
<span class="m" style="top:457px">内容识别缩放</span><span class="s w" style="top:457px">Alt+Shift+Ctrl+C</span>
<span class="m" style="top:481px">操控变形</span>
<span class="m" style="top:504px">透视变形</span>
<span class="m" style="top:529px">自由变换(F)</span><span class="s" style="top:529px">Ctrl+T</span>
<span class="m" style="top:553px">变换</span>
<span class="m g" style="top:575px">自动对齐图层...</span>
<span class="m g" style="top:598px">自动混合图层...</span>
<span class="m" style="top:621px">天空替换...</span>
<div class="h" style="top:638px"></div>
<span class="m" style="top:654px">定义画笔预设(B)...</span>
<div class="b" style="left:2px;right:2px;top:666px;height:23px;background:#0078d7"></div>
<span class="m" style="top:678px;color:#e6eef6">定义图案...</span>
<span class="m g" style="top:701px">定义自定形状...</span>
<div class="h" style="top:718px"></div>
<span class="m" style="top:737px">清理(R)</span>
<div class="h" style="top:751px"></div>
<span class="m" style="top:768px;letter-spacing:.1px">Adobe PDF 预设...</span>
<span class="m" style="top:794px">预设</span>
<span class="m" style="top:815px">远程连接...</span>
<div class="h" style="top:832px"></div>
<span class="m" style="top:848px">颜色设置(G)...</span><span class="s" style="top:848px">Shift+Ctrl+K</span>
<span class="m" style="top:871px">指定配置文件...</span>
<span class="m" style="top:895px">转换为配置文件(V)...</span>
<div class="h" style="top:912px"></div>
<span class="m" style="top:929px">键盘快捷键...</span><span class="s w" style="top:929px">Alt+Shift+Ctrl+K</span>
</div>

</div></body></html>
